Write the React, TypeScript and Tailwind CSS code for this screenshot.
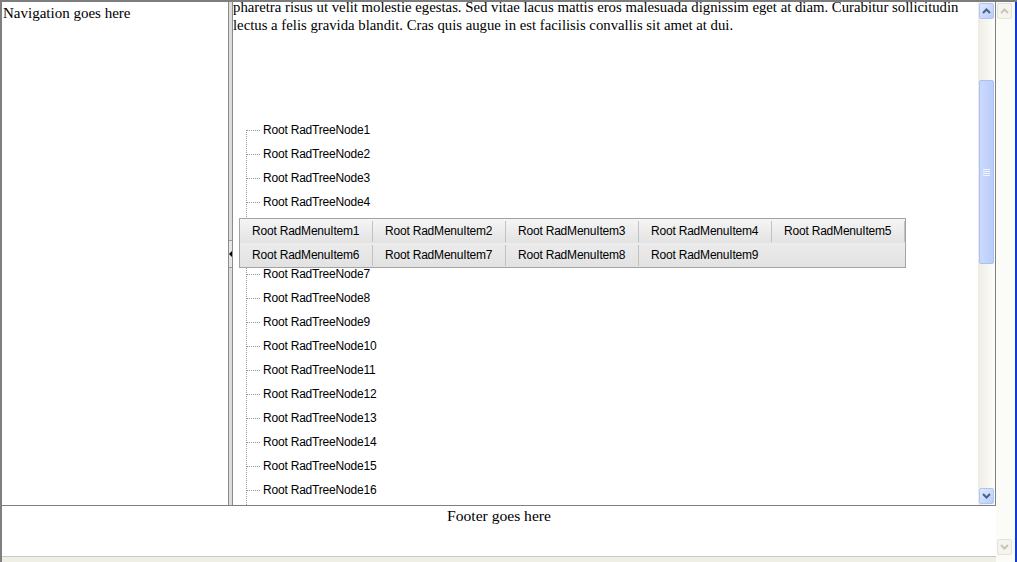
import React from "react";

// --- Data ---
const treeNodes = Array.from({ length: 20 }, (_, i) => `Root RadTreeNode${i + 1}`);
const menuRows = [
  ["Root RadMenuItem1", "Root RadMenuItem2", "Root RadMenuItem3", "Root RadMenuItem4", "Root RadMenuItem5"],
  ["Root RadMenuItem6", "Root RadMenuItem7", "Root RadMenuItem8", "Root RadMenuItem9"],
];

function Chevron({ dir, color }: { dir: "up" | "down"; color: string }) {
  return (
    <svg width="9" height="6" viewBox="0 0 9 6" className="block">
      <polyline
        points={dir === "up" ? "1,5 4.5,1.5 8,5" : "1,1 4.5,4.5 8,1"}
        fill="none"
        stroke={color}
        strokeWidth="2"
      />
    </svg>
  );
}

function ScrollButton({ dir, disabled }: { dir: "up" | "down"; disabled?: boolean }) {
  if (disabled) {
    return (
      <div className="mx-[1px] h-[16px] rounded-[2px] border border-[#e4e3da] bg-[#f5f4ef] flex items-center justify-center">
        <Chevron dir={dir} color="#c8c6b8" />
      </div>
    );
  }
  return (
    <div className="mx-[1px] h-[16px] rounded-[2px] border border-[#b1c4f3] bg-gradient-to-br from-[#e0e9fe] to-[#b9cdfa] flex items-center justify-center">
      <Chevron dir={dir} color="#4d6185" />
    </div>
  );
}

// dotted tree connector, first node starts at its own line
function Connector({ first }: { first: boolean }) {
  return (
    <svg width="16" height="24" viewBox="0 0 16 24" className="block shrink-0" shapeRendering="crispEdges">
      <line x1="0.5" y1={first ? 12 : 0} x2="0.5" y2="24" stroke="#9a9a9a" strokeDasharray="1 1" />
      <line x1="1" y1="12.5" x2="14" y2="12.5" stroke="#9a9a9a" strokeDasharray="1 1" />
    </svg>
  );
}

function InnerScrollbar() {
  return (
    <div className="w-[17px] shrink-0 flex flex-col bg-gradient-to-r from-[#eeede5] to-[#fdfdfa] pt-[1px] pb-[1px]">
      <ScrollButton dir="up" />
      <div className="flex-1 flex flex-col">
        <div className="h-[61px]" />
        <div className="mx-[1px] h-[184px] rounded-[2px] border border-[#a9bff5] bg-gradient-to-r from-[#cbd9fd] to-[#bacdfa] flex flex-col items-center justify-center gap-[1px]">
          <div className="w-[7px] h-px bg-[#eef3ff]" />
          <div className="w-[7px] h-px bg-[#eef3ff]" />
          <div className="w-[7px] h-px bg-[#eef3ff]" />
          <div className="w-[7px] h-px bg-[#eef3ff]" />
        </div>
      </div>
      <ScrollButton dir="down" />
    </div>
  );
}

export default function App() {
  return (
    <div className="w-[1017px] h-[562px] flex flex-col overflow-hidden bg-white font-['Liberation_Serif',serif] text-[15.2px] text-black">
      <div className="h-[2px] shrink-0 bg-[#7d7d7d]" />
      <div className="flex-1 flex min-h-0">
        {/* page column */}
        <div className="w-[996px] shrink-0 flex flex-col border-l-2 border-[#7f7f7f]">
          {/* main box */}
          <div className="h-[504px] shrink-0 flex border-b border-r border-[#808080]">
            {/* navigation */}
            <div className="w-[226px] shrink-0 pl-[1px] pt-[2px] leading-[18px] text-[15px]">Navigation goes here</div>

            {/* splitter */}
            <div className="w-[5px] shrink-0 flex flex-col justify-center border-l border-r border-[#8c8c8c] bg-[#dcdcdc]">
              <div className="h-[28px] border-y border-[#9a9a9a] bg-[#e6e6e6] flex items-center justify-center">
                <svg width="3" height="6" viewBox="0 0 3 6" className="block">
                  <polygon points="3,0 0,3 3,6" fill="#000" />
                </svg>
              </div>
            </div>

            {/* content */}
            <div className="flex-1 relative overflow-hidden flex flex-col">
              <p className="mt-[-4px] leading-[18px] text-[14.75px] whitespace-nowrap">
                pharetra risus ut velit molestie egestas. Sed vitae lacus mattis eros malesuada dignissim eget at diam. Curabitur sollicitudin
                <br />
                lectus a felis gravida blandit. Cras quis augue in est facilisis convallis sit amet at dui.
              </p>

              <ul className="mt-[84px] pl-[13px] font-['Liberation_Sans',Arial,sans-serif] text-[12px] tracking-[-0.2px]">
                {treeNodes.map((n, i) => (
                  <li key={n} className="h-[24px] flex items-center">
                    <Connector first={i === 0} />
                    <span className="pl-[1px] leading-[24px]">{n}</span>
                  </li>
                ))}
              </ul>

              {/* menu overlay */}
              <div className="absolute left-[6px] top-[216px] w-[667px] border border-[#a3a3a3] font-['Liberation_Sans',Arial,sans-serif] text-[12px] tracking-[-0.2px]">
                {menuRows.map((row, r) => (
                  <div
                    key={r}
                    className={
                      r === 0
                        ? "h-[24px] flex bg-gradient-to-b from-[#f5f5f5] to-[#e3e3e3]"
                        : "h-[24px] flex bg-gradient-to-b from-[#ececec] to-[#e2e2e2]"
                    }
                  >
                    {row.map((item, k) => {
                      const last = r === 1 && k === row.length - 1;
                      return (
                        <div key={item} className="w-[133px] shrink-0 flex items-center">
                          <span className="w-[132px] pl-[12px] whitespace-nowrap">{item}</span>
                          {!last && <span className="w-px h-[21px] bg-[#c2c2c2]" />}
                        </div>
                      );
                    })}
                  </div>
                ))}
              </div>
            </div>

            <InnerScrollbar />
          </div>

          {/* footer */}
          <div className="flex-1 pt-[1px] text-center leading-[18px] text-[15.6px]">Footer goes here</div>
          <div className="h-[6px] shrink-0 border-t border-[#c9c8bf] bg-[#f0efe6]" />
        </div>

        {/* window scrollbar (disabled) */}
        <div className="w-[19px] shrink-0 flex flex-col justify-between bg-[#fbfbf8] pt-[1px] pb-[7px] pr-[2px]">
          <ScrollButton dir="up" disabled />
          <ScrollButton dir="down" disabled />
        </div>
        <div className="w-[2px] shrink-0 bg-[#0b3cdb]" />
      </div>
    </div>
  );
}
